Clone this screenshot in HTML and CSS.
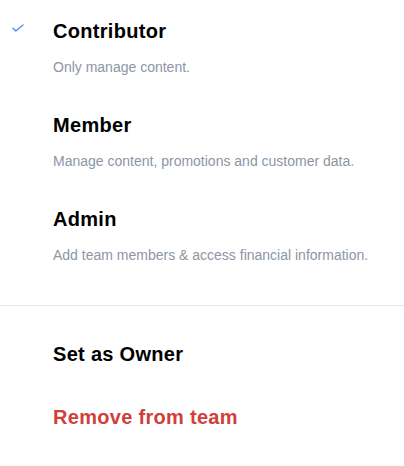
FILE: index.html
```
<html>
    <head>
        <title>Team role</title>
        <link rel="stylesheet" href="styles.css">
    </head>
    <body>
        <!-- Role options -->
        <ul class="roles">
            <li class="role selected">
                <svg class="check" width="12" height="8" viewBox="0 0 12 8">
                    <path d="M1 4.2 L3.8 7 L11 1" fill="none" stroke="#4d8ff0" stroke-width="1.4" stroke-linecap="round" stroke-linejoin="round"/>
                </svg>
                <h3>Contributor</h3>
                <p>Only manage content.</p>
            </li>
            <li class="role">
                <h3>Member</h3>
                <p>Manage content, promotions and customer data.</p>
            </li>
            <li class="role">
                <h3>Admin</h3>
                <p>Add team members &amp; access financial information.</p>
            </li>
        </ul>

        <!-- Actions -->
        <ul class="actions">
            <li class="action">Set as Owner</li>
            <li class="action danger">Remove from team</li>
        </ul>
    </body>
</html>
```

FILE: styles.css
```
body {
    margin: 0;
    background: #ffffff;
    color: #000000;
    font-family: 'Liberation Sans', Arial, sans-serif;
}

ul {
    list-style: none;
    margin: 0;
    padding: 0;
}

.roles {
    padding-bottom: 23px;
    border-bottom: 1px solid #e6e6e6;
}

.role {
    position: relative;
    padding: 19px 0 17px 53px;
}

.role h3 {
    margin: 0;
    font-size: 20px;
    line-height: 24px;
    font-weight: bold;
    letter-spacing: 0.3px;
}

.role p {
    margin: 14px 0 0 0;
    font-size: 14px;
    line-height: 20px;
    color: #8c96a5;
}

.check {
    position: absolute;
    left: 12px;
    top: 24px;
}

.actions {
    padding-top: 16px;
}

.action {
    padding: 20px 0 19px 53px;
    font-size: 20px;
    line-height: 24px;
    font-weight: bold;
    letter-spacing: 0.3px;
}

.danger {
    color: #d0403a;
}
```
